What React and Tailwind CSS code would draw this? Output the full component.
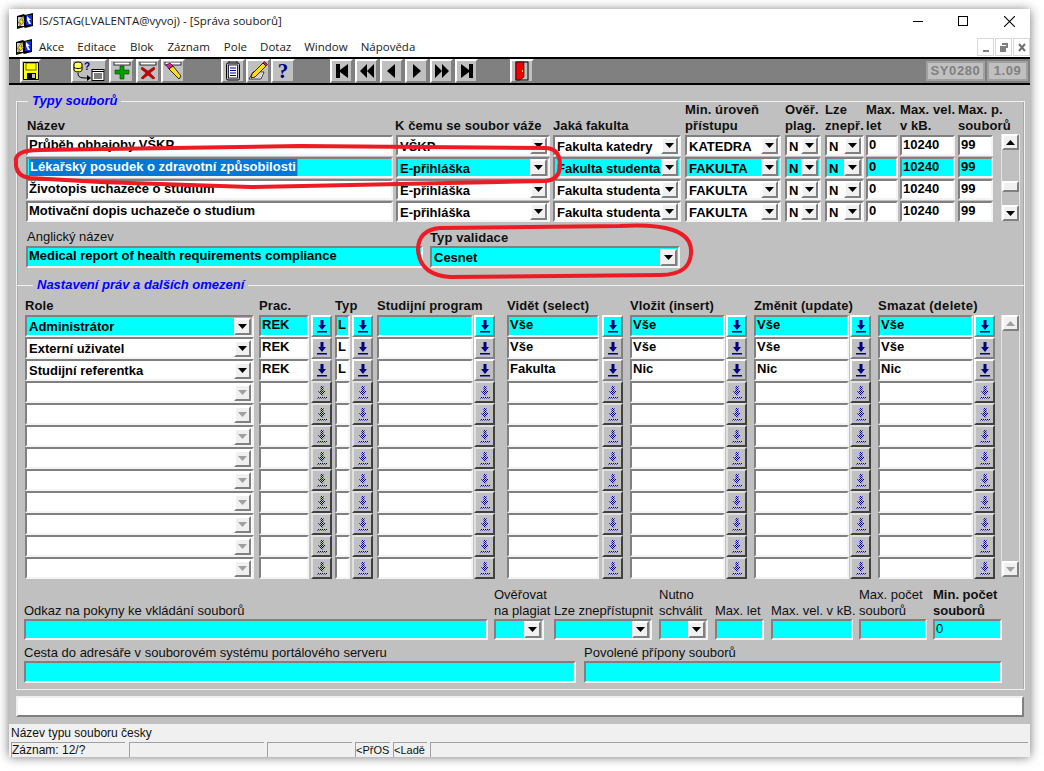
const sunken = "border-2 border-t-[#808080] border-l-[#808080] border-r-[#f4f4f4] border-b-[#f4f4f4]";
const raised = "border-2 border-t-[#ffffff] border-l-[#ffffff] border-r-[#808080] border-b-[#808080]";

const AppIcon = ({ cls }) => (
  <svg viewBox="0 0 16 16" className={cls}>
    <path d="M0 3l7-2 1 1 8-2v13l-8 2-1-1-7 2z" fill="#000" />
    <rect x="1" y="4" width="6" height="9" fill="#e8e8e8" />
    <path d="M1 5h6M1 7h6M1 9h6M1 11h6" stroke="#808080" strokeWidth=".5" />
    <rect x="9" y="2" width="6" height="10" fill="#1030d0" />
    <path d="M10 3l4 4-2 0 2 4-2 0-2-4z" fill="#fff" />
    <path d="M6 3L1 10h3l-3 5 7-7H5l2-5z" fill="#ffe000" stroke="#000" strokeWidth=".4" />
  </svg>
);

const Arrow = ({ off }) => (
  <svg viewBox="0 0 9 5" className="w-[9px] h-[5px]">
    <path d="M0 0h9L4.5 5z" fill={off ? "#a0a0a0" : "#000"} />
  </svg>
);

const Field = ({ cls, cyan, children, sel }) => (
  <div className={`${sunken} ${cls} h-full shrink-0 flex items-center pl-[1px] pb-[2px] overflow-hidden whitespace-nowrap text-[13px] font-bold text-black ${cyan ? "bg-[#00ffff]" : "bg-white"}`}>
    {sel ? <span className="bg-[#0078d7] text-white px-[1px] border-r border-[#e08030]">{children}</span> : children}
  </div>
);

const Combo = ({ cls, cyan, children, off }) => (
  <div className={`${sunken} ${cls} h-full shrink-0 flex items-center overflow-hidden whitespace-nowrap text-[13px] font-bold text-black ${cyan ? "bg-[#00ffff]" : "bg-white"}`}>
    <span className="flex-1 pl-[2px] pt-[2px] overflow-hidden">{children}</span>
    <span className={`${raised} w-[17px] h-[17px] shrink-0 mr-[1px] bg-[#f0f0f0] flex items-center justify-center`}>
      <Arrow off={off} />
    </span>
  </div>
);

const LovBtn = ({ cls, cyan, off }) => (
  <div className={`${off ? "border-2 border-t-[#e0e0e0] border-l-[#e0e0e0] border-r-[#404040] border-b-[#404040]" : raised} ${cls} w-[21px] h-full shrink-0 flex items-center justify-center ${cyan ? "bg-[#00ffff]" : "bg-[#c0c0c0]"}`}>
    <svg viewBox="0 0 10 13" className="w-[10px] h-[13px]">
      <defs>
        <pattern id="dith" width="2" height="2" patternUnits="userSpaceOnUse">
          <rect width="1" height="1" fill="#000080" />
          <rect x="1" y="1" width="1" height="1" fill="#000080" />
        </pattern>
      </defs>
      <path d="M3.5 0h3v5H9L5 10 1 5h2.5z" fill={off ? "url(#dith)" : "#000080"} />
      <rect x="0" y="11" width="10" height="1.5" fill={off ? "url(#dith)" : "#000080"} />
    </svg>
  </div>
);

const ScrollBtn = ({ up, off }) => (
  <div className={`${raised} w-full h-[16px] shrink-0 bg-[#f0f0f0] flex items-center justify-center`}>
    <svg viewBox="0 0 9 5" className={`w-[9px] h-[5px] ${up ? "rotate-180" : ""}`}>
      <path d="M0 0h9L4.5 5z" fill={off ? "#a0a0a0" : "#000"} />
    </svg>
  </div>
);

const TbBtn = ({ cls, children }) => (
  <div className={`${raised} ${cls} h-[24px] shrink-0 bg-[#c0c0c0] flex items-center justify-center`}>
    {children}
  </div>
);

const Toolbar = () => (
  <div className="h-[28px] shrink-0 bg-[#808080] border-t-2 border-b-2 border-black flex items-center">
    <TbBtn cls="w-[21px] ml-[11px]">
      <svg viewBox="0 0 16 18" className="w-[16px] h-[18px]">
        <path d="M.5.5h15v17H.5z" fill="#ffff00" stroke="#000" />
        <rect x="3" y="1" width="10" height="7" fill="#ffff00" stroke="#000" strokeWidth=".6" />
        <rect x="4" y="11" width="9" height="6" fill="#000" />
        <rect x="9" y="12" width="3" height="4" fill="#c0c0c0" />
      </svg>
    </TbBtn>
    <TbBtn cls="w-[36px] ml-[30px]">
      <svg viewBox="0 0 32 20" className="w-[32px] h-[20px]">
        <ellipse cx="5" cy="3" rx="4" ry="2" fill="#ffff60" stroke="#000" />
        <path d="M1 3v6c0 2.500 8 2.500 8 0V3" fill="#ffff60" stroke="#000" />
        <path d="M1 6c0 2 8 2 8 0" fill="none" stroke="#000" />
        <text x="11" y="9" fontSize="10" fontWeight="700" fill="#000080">?</text>
        <path d="M5 12c0 5 3 5 11 5" fill="none" stroke="#000" />
        <path d="M14 14l4 3-4 3z" fill="#000" />
        <rect x="19" y="8.500" width="12" height="11" fill="#fff" stroke="#000" />
        <path d="M19 10.500h12M21 13h8M21 15h8M21 17h8" stroke="#000" />
      </svg>
    </TbBtn>
    <TbBtn cls="w-[25px] ml-[2px]">
      <svg viewBox="0 0 18 18" className="w-[18px] h-[18px]">
        <rect x="1" y="0" width="16" height="3" fill="#fff" stroke="#000" strokeWidth=".8" />
        <path d="M7 4h4v4h5v4h-5v5H7v-5H2V8h5z" fill="#00a000" stroke="#004000" strokeWidth=".6" />
      </svg>
    </TbBtn>
    <TbBtn cls="w-[24px] ml-[2px]">
      <svg viewBox="0 0 18 18" className="w-[18px] h-[18px]">
        <rect x="1" y="0" width="16" height="3" fill="#fff" stroke="#000" strokeWidth=".8" />
        <path d="M3 5l6 4 6-4 1 2-5 4 5 5-2 1-5-4-5 4-2-1 5-5-5-4z" fill="#d00000" stroke="#600000" strokeWidth=".5" />
      </svg>
    </TbBtn>
    <TbBtn cls="w-[24px] ml-[1px]">
      <svg viewBox="0 0 18 18" className="w-[18px] h-[18px]">
        <rect x="1" y="0" width="16" height="3" fill="#fff" stroke="#000" strokeWidth=".8" />
        <path d="M2 3l4-2 3 3-4 3z" fill="#e0209a" stroke="#000" strokeWidth=".6" />
        <path d="M5 7l4-3 8 10-2 3z" fill="#ffe020" stroke="#000" strokeWidth=".8" />
      </svg>
    </TbBtn>
    <TbBtn cls="w-[24px] ml-[36px]">
      <svg viewBox="0 0 16 20" className="w-[16px] h-[20px]">
        <rect x="4" y="0" width="8" height="3" fill="#c0c0c0" stroke="#000" strokeWidth=".8" />
        <rect x="1.500" y="2" width="13" height="17" rx="1.500" fill="#c0c0c0" stroke="#000" />
        <rect x="3.500" y="4" width="9" height="13" fill="#fff" stroke="#000" strokeWidth=".8" />
        <path d="M5 7h6M5 9.500h6M5 12h6M5 14.500h6" stroke="#0000a0" />
      </svg>
    </TbBtn>
    <TbBtn cls="w-[24px] ml-[1px]">
      <svg viewBox="0 0 20 20" className="w-[20px] h-[20px]">
        <path d="M1 18l4-7h11l-3 7z" fill="#fff" stroke="#000" strokeWidth=".7" />
        <path d="M5 13h9M4 15h9M3 17h9" stroke="#808080" strokeWidth=".7" />
        <path d="M3 17l1-4L15 2l3 3L7 16z" fill="#ffd820" stroke="#000" strokeWidth=".8" />
        <path d="M15 2l1.500-1.500 3 3L18 5z" fill="#e02060" stroke="#000" strokeWidth=".6" />
      </svg>
    </TbBtn>
    <TbBtn cls="w-[24px] ml-[1px]">
      <span className="text-[21px] leading-none font-bold font-['Liberation_Serif',serif] text-[#000080]">?</span>
    </TbBtn>
    <div className="ml-[35px] flex items-center">
      <TbBtn cls="w-[23px]"><svg viewBox="0 0 14 14" className="w-[14px] h-[14px]"><path d="M1 0h4v6l8-6v14L5 8v6H1z" fill="#000" /></svg></TbBtn>
      <TbBtn cls="w-[23px] ml-[2px]"><svg viewBox="0 0 14 14" className="w-[14px] h-[14px]"><path d="M7 0v14L0 7zM14 0v14L7 7z" fill="#000" /></svg></TbBtn>
      <TbBtn cls="w-[23px] ml-[2px]"><svg viewBox="0 0 14 14" className="w-[14px] h-[14px]"><path d="M10 0v14L2 7z" fill="#000" /></svg></TbBtn>
      <TbBtn cls="w-[23px] ml-[2px]"><svg viewBox="0 0 14 14" className="w-[14px] h-[14px]"><path d="M3 0v14l8-7z" fill="#000" /></svg></TbBtn>
      <TbBtn cls="w-[23px] ml-[2px]"><svg viewBox="0 0 14 14" className="w-[14px] h-[14px]"><path d="M0 0v14l7-7zM7 0v14l7-7z" fill="#000" /></svg></TbBtn>
      <TbBtn cls="w-[23px] ml-[2px]"><svg viewBox="0 0 14 14" className="w-[14px] h-[14px]"><path d="M1 0v14l8-6v6h4V0H9v6z" fill="#000" /></svg></TbBtn>
    </div>
    <TbBtn cls="w-[24px] ml-[32px]">
      <svg viewBox="0 0 14 20" className="w-[14px] h-[20px]">
        <rect x="1" y="1" width="12" height="18" fill="#c0c0c0" stroke="#000" />
        <path d="M1 1h8v15l-4 3H1z" fill="#f00000" stroke="#000" strokeWidth=".6" />
        <rect x="7" y="9" width="1" height="2" fill="#ffe000" />
      </svg>
    </TbBtn>
    <div className="ml-auto flex items-center gap-[2px] mr-[2px]">
      <div className="border-2 border-[#a0a0a0] h-[20px] w-[59px] bg-[#c0c0c0] flex items-center justify-center text-[13px] font-bold tracking-[0.6px] text-[#808080]">SY0280</div>
      <div className="border-2 border-[#a0a0a0] h-[20px] w-[41px] bg-[#c0c0c0] flex items-center justify-center text-[13px] font-bold tracking-[0.6px] text-[#808080]">1.09</div>
    </div>
  </div>
);

const Legend = ({ children, cls }) => (
  <span className={`absolute -top-[9px] ${cls} bg-[#c0c0c0] px-[4px] leading-[16px] text-[13px] font-bold italic text-[#0000ff] whitespace-nowrap`}>{children}</span>
);

const topRows = [
  ["Průběh obhajoby VŠKP", "VŠKP", "Fakulta katedry", "KATEDRA"],
  ["Lékařský posudek o zdravotní způsobilosti", "E-přihláška", "Fakulta studenta", "FAKULTA"],
  ["Životopis uchazeče o studium", "E-přihláška", "Fakulta studenta", "FAKULTA"],
  ["Motivační dopis uchazeče o studium", "E-přihláška", "Fakulta studenta", "FAKULTA"],
];

const perms = [
  ["Administrátor", "REK", "L", "", "Vše", "Vše", "Vše", "Vše"],
  ["Externí uživatel", "REK", "L", "", "Vše", "Vše", "Vše", "Vše"],
  ["Studijní referentka", "REK", "L", "", "Fakulta", "Nic", "Nic", "Nic"],
  ...Array.from({ length: 9 }, () => ["", "", "", "", "", "", "", ""]),
];

const Head = ({ cls, children }) => (
  <div className={`${cls} shrink-0 whitespace-nowrap text-[13px] leading-[16px] font-bold tracking-[0.1px] text-[#101010]`}>{children}</div>
);

const Lbl = ({ cls, children, bold }) => (
  <div className={`${cls} shrink-0 whitespace-nowrap text-[13px] leading-[16px] text-[#101010] ${bold ? "font-bold" : ""}`}>{children}</div>
);

export default function App() {
  return (
    <div className="relative w-[1044px] h-[771px] bg-white pl-[9px] pt-[9px] font-['Liberation_Sans',Arial,sans-serif] overflow-hidden">
      <div className="w-[1021px] h-[747px] flex flex-col bg-[#f0f0f0] shadow-[0_1px_10px_rgba(0,0,0,0.55)]">
        {/* title bar */}
        <div className="h-[24px] shrink-0 bg-white flex items-center pl-[8px] font-['Open_Sans',sans-serif] text-[11.5px] text-[#202020]">
          <AppIcon cls="w-[16px] h-[16px]" />
          <span className="ml-[6px] whitespace-nowrap">IS/STAG(LVALENTA@vyvoj) - [Správa souborů]</span>
          <div className="ml-auto flex items-center">
            <svg viewBox="0 0 10 1" className="w-[10px] h-[1px] mr-[35px]"><rect width="10" height="1" fill="#000" /></svg>
            <svg viewBox="0 0 10 10" className="w-[10px] h-[10px] mr-[36px]"><rect x=".5" y=".5" width="9" height="9" fill="none" stroke="#000" /></svg>
            <svg viewBox="0 0 10 10" className="w-[11px] h-[11px] mr-[15px]"><path d="M0 0l10 10M10 0L0 10" stroke="#000" /></svg>
          </div>
        </div>
        {/* menu */}
        <div className="h-[24px] shrink-0 bg-white flex items-center pl-[7px] pt-[3px] text-[11.5px] text-[#202020] font-['Open_Sans',sans-serif]">
          <AppIcon cls="w-[16px] h-[16px]" />
          <span className="ml-[7px]">Akce</span>
          <span className="ml-[13px]">Editace</span>
          <span className="ml-[14px]">Blok</span>
          <span className="ml-[14px]">Záznam</span>
          <span className="ml-[14px]">Pole</span>
          <span className="ml-[13px]">Dotaz</span>
          <span className="ml-[13px]">Window</span>
          <span className="ml-[13px]">Nápověda</span>
          <div className="ml-auto flex items-center gap-[1px]">
            {["M3 10h6v2H3z", "M4 3h6v5H8V5H4zM2 6h6v6H2z", "M3 4l6 7M9 4l-6 7"].map((d, i) => (
              <div key={i} className="w-[17px] h-[18px] border border-[#d8d8d8] flex items-center justify-center">
                <svg viewBox="0 0 12 14" className="w-[12px] h-[14px]"><path d={d} fill={i === 2 ? "none" : "#808080"} stroke="#707070" strokeWidth={i === 2 ? 2 : 0} /></svg>
              </div>
            ))}
          </div>
        </div>
        <Toolbar />

        {/* form */}
        <div className="h-[639px] shrink-0 bg-[#c0c0c0] pt-[16px] pl-[7px] flex flex-col">
          <div className="relative w-[1009px] h-[184px] shrink-0 border border-b-0 border-[#f0f0f0] shadow-[inset_1px_0_0_#a8a8a8,inset_-1px_0_0_#a8a8a8] pl-[9px]">
            <Legend cls="left-[11px]">Typy souborů</Legend>
            <div className="h-[32px] flex items-end">
              <Head cls="w-[367px] pl-[1px]">Název</Head>
              <Head cls="w-[154px] ml-[2px]">K čemu se soubor váže</Head>
              <Head cls="w-[128px] ml-[4px]">Jaká fakulta</Head>
              <Head cls="w-[96px] ml-[4px]">Min. úroveň<br />přístupu</Head>
              <Head cls="w-[36px] ml-[4px]">Ověř.<br />plag.</Head>
              <Head cls="w-[39px] ml-[4px]">Lze<br />znepř.</Head>
              <Head cls="w-[32px] ml-[2px]">Max.<br />let</Head>
              <Head cls="w-[55px] ml-[2px]">Max. vel.<br />v kB.</Head>
              <Head cls="w-[35px] ml-[3px]">Max. p.<br />souborů</Head>
            </div>
            <div className="mt-[1px] flex items-start">
              <div className="flex flex-col gap-[1px]">
                {topRows.map((r, i) => {
                  const cyan = i === 1;
                  return (
                    <div key={i} className="h-[21px] flex">
                      <Field cls="w-[367px]" cyan={cyan} sel={cyan}>{r[0]}</Field>
                      <Combo cls="w-[154px] ml-[3px]" cyan={cyan}>{r[1]}</Combo>
                      <Combo cls="w-[128px] ml-[3px]" cyan={cyan}>{r[2]}</Combo>
                      <Combo cls="w-[96px] ml-[4px]" cyan={cyan}>{r[3]}</Combo>
                      <Combo cls="w-[36px] ml-[4px]" cyan={cyan}>N</Combo>
                      <Combo cls="w-[39px] ml-[4px]" cyan={cyan}>N</Combo>
                      <Field cls="w-[32px] ml-[2px]" cyan={cyan}>0</Field>
                      <Field cls="w-[55px] ml-[2px]" cyan={cyan}>10240</Field>
                      <Field cls="w-[35px] ml-[3px]" cyan={cyan}>99</Field>
                    </div>
                  );
                })}
              </div>
              <div className="ml-[8px] -mt-[1px] w-[19px] h-[87px] flex flex-col border-x border-[#e4e4e4]">
                <ScrollBtn up />
                <div className="h-[31px]" />
                <div className={`${raised} h-[11px] bg-[#f0f0f0]`} />
                <div className="flex-1" />
                <ScrollBtn />
              </div>
            </div>
            <div className="mt-[7px] flex h-[16px]">
              <Lbl cls="w-[404px] pl-[1px]">Anglický název</Lbl>
              <Head cls="pt-[1px]">Typ validace</Head>
            </div>
            <div className="mt-[1px] h-[22px] flex">
              <Field cls="w-[397px]" cyan>Medical report of health requirements compliance</Field>
              <Combo cls="w-[250px] ml-[7px]" cyan>Cesnet</Combo>
            </div>
          </div>

          <div className="relative w-[1009px] h-[405px] shrink-0 border border-[#f0f0f0] shadow-[inset_1px_0_0_#a8a8a8,inset_-1px_0_0_#a8a8a8] pl-[8px] pt-[12px]">
            <Legend cls="left-[16px]">Nastavení práv a dalších omezení</Legend>
            <div className="h-[16px] flex">
              <Head cls="w-[229px]">Role</Head>
              <Head cls="w-[73px] ml-[5px]">Prac.</Head>
              <Head cls="w-[38px] ml-[3px]">Typ</Head>
              <Head cls="w-[118px] ml-[4px]">Studijní program</Head>
              <Head cls="w-[116px] ml-[12px]">Vidět (select)</Head>
              <Head cls="w-[117px] ml-[7px]">Vložit (insert)</Head>
              <Head cls="w-[117px] ml-[7px]">Změnit (update)</Head>
              <Head cls="w-[117px] ml-[7px] tracking-[0.3px]">Smazat (delete)</Head>
            </div>
            <div className="mt-[1px] flex items-start">
              <div className="flex flex-col">
                {perms.map((p, i) => {
                  const cyan = i === 0;
                  const off = i > 2;
                  return (
                    <div key={i} className="h-[22px] flex">
                      <Combo cls="w-[229px]" cyan={cyan} off={off}>{p[0]}</Combo>
                      <Field cls="w-[50px] ml-[5px]" cyan={cyan}>{p[1]}</Field>
                      <LovBtn cls="ml-[2px]" cyan={cyan} off={off} />
                      <Field cls="w-[15px] ml-[3px]" cyan={cyan}>{p[2]}</Field>
                      <LovBtn cls="ml-[2px]" cyan={cyan} off={off} />
                      <Field cls="w-[96px] ml-[4px]" cyan={cyan}>{p[3]}</Field>
                      <LovBtn cls="ml-[1px]" cyan={cyan} off={off} />
                      <Field cls="w-[92px] ml-[12px]" cyan={cyan}>{p[4]}</Field>
                      <LovBtn cls="ml-[3px]" cyan={cyan} off={off} />
                      <Field cls="w-[95px] ml-[7px]" cyan={cyan}>{p[5]}</Field>
                      <LovBtn cls="ml-[1px]" cyan={cyan} off={off} />
                      <Field cls="w-[95px] ml-[7px]" cyan={cyan}>{p[6]}</Field>
                      <LovBtn cls="ml-[1px]" cyan={cyan} off={off} />
                      <Field cls="w-[95px] ml-[7px]" cyan={cyan}>{p[7]}</Field>
                      <LovBtn cls="ml-[1px]" cyan={cyan} off={off} />
                    </div>
                  );
                })}
              </div>
              <div className="ml-[6px] w-[19px] h-[262px] flex flex-col justify-between border-x border-[#e4e4e4]">
                <ScrollBtn up off />
                <ScrollBtn off />
              </div>
            </div>
            <div className="mt-[8px] -ml-[1px] h-[32px] flex items-end">
              <Lbl cls="w-[464px]">Odkaz na pokyny ke vkládání souborů</Lbl>
              <Lbl cls="w-[50px] ml-[6px]">Ověřovat<br />na plagiat</Lbl>
              <Lbl cls="w-[98px] ml-[10px]">Lze znepřístupnit</Lbl>
              <Lbl cls="w-[49px] ml-[7px]">Nutno<br />schválit</Lbl>
              <Lbl cls="w-[49px] ml-[7px]">Max. let</Lbl>
              <Lbl cls="w-[82px] ml-[7px]">Max. vel. v kB.</Lbl>
              <Lbl cls="w-[68px] ml-[6px]">Max. počet<br />souborů</Lbl>
              <Lbl cls="w-[69px] ml-[6px]" bold>Min. počet<br />souborů</Lbl>
            </div>
            <div className="-ml-[1px] h-[21px] flex">
              <Field cls="w-[464px]" cyan />
              <Combo cls="w-[50px] ml-[6px]" cyan />
              <Combo cls="w-[98px] ml-[10px]" cyan />
              <Combo cls="w-[49px] ml-[7px]" cyan />
              <Field cls="w-[49px] ml-[7px]" cyan />
              <Field cls="w-[82px] ml-[7px]" cyan />
              <Field cls="w-[68px] ml-[6px]" cyan />
              <Field cls="w-[69px] ml-[6px] !font-normal" cyan>0</Field>
            </div>
            <div className="mt-[5px] -ml-[1px] h-[16px] flex">
              <Lbl cls="w-[560px]">Cesta do adresáře v souborovém systému portálového serveru</Lbl>
              <Lbl cls="">Povolené přípony souborů</Lbl>
            </div>
            <div className="-ml-[1px] h-[22px] flex">
              <Field cls="w-[552px]" cyan />
              <Field cls="w-[418px] ml-[8px]" cyan />
            </div>
          </div>

          <div className="mt-[6px] w-[1008px] h-[21px] shrink-0 bg-white border-2 border-t-[#f0f0f0] border-l-[#f0f0f0] border-r-[#808080] border-b-[#808080]" />
        </div>

        {/* status */}
        <div className="flex-1 bg-[#f0f0f0] flex flex-col text-[12px] text-[#101010]">
          <div className="h-[17px] flex items-center pl-[2px] pt-[1px]">Název typu souboru česky</div>
          <div className="flex-1 flex border-t border-transparent">
            {[
              ["Záznam: 12/?", "w-[114px] ml-[2px]"],
              ["", "w-[135px] ml-[4px]"],
              ["", "w-[85px] ml-[3px]"],
              ["<PřOS", "w-[35px] ml-[3px] text-[11px]"],
              ["<Ladě", "w-[34px] ml-[3px] text-[11px]"],
              ["", "w-[598px] ml-[3px]"],
            ].map(([t, cls], i) => (
              <div key={i} className={`${cls} h-[15px] border-t border-l border-[#a0a0a0] leading-[14px] whitespace-nowrap`}>{t}</div>
            ))}
          </div>
        </div>
      </div>

      {/* red hand drawn marks */}
      <svg viewBox="0 0 1044 771" className="absolute inset-0 w-[1044px] h-[771px] pointer-events-none">
        <path d="M16 162Q14 150 40 150L300 146L545 148Q560 148 560 165Q560 180 545 181L400 184L250 187L100 182L30 178Q15 176 16 162Z" fill="none" stroke="#ed1c24" strokeWidth="4" />
        <path d="M418 250Q418 230 440 228L620 226Q690 222 691 250Q692 275 660 275L450 277Q420 275 418 250Z" fill="none" stroke="#ed1c24" strokeWidth="4" />
      </svg>
    </div>
  );
}
